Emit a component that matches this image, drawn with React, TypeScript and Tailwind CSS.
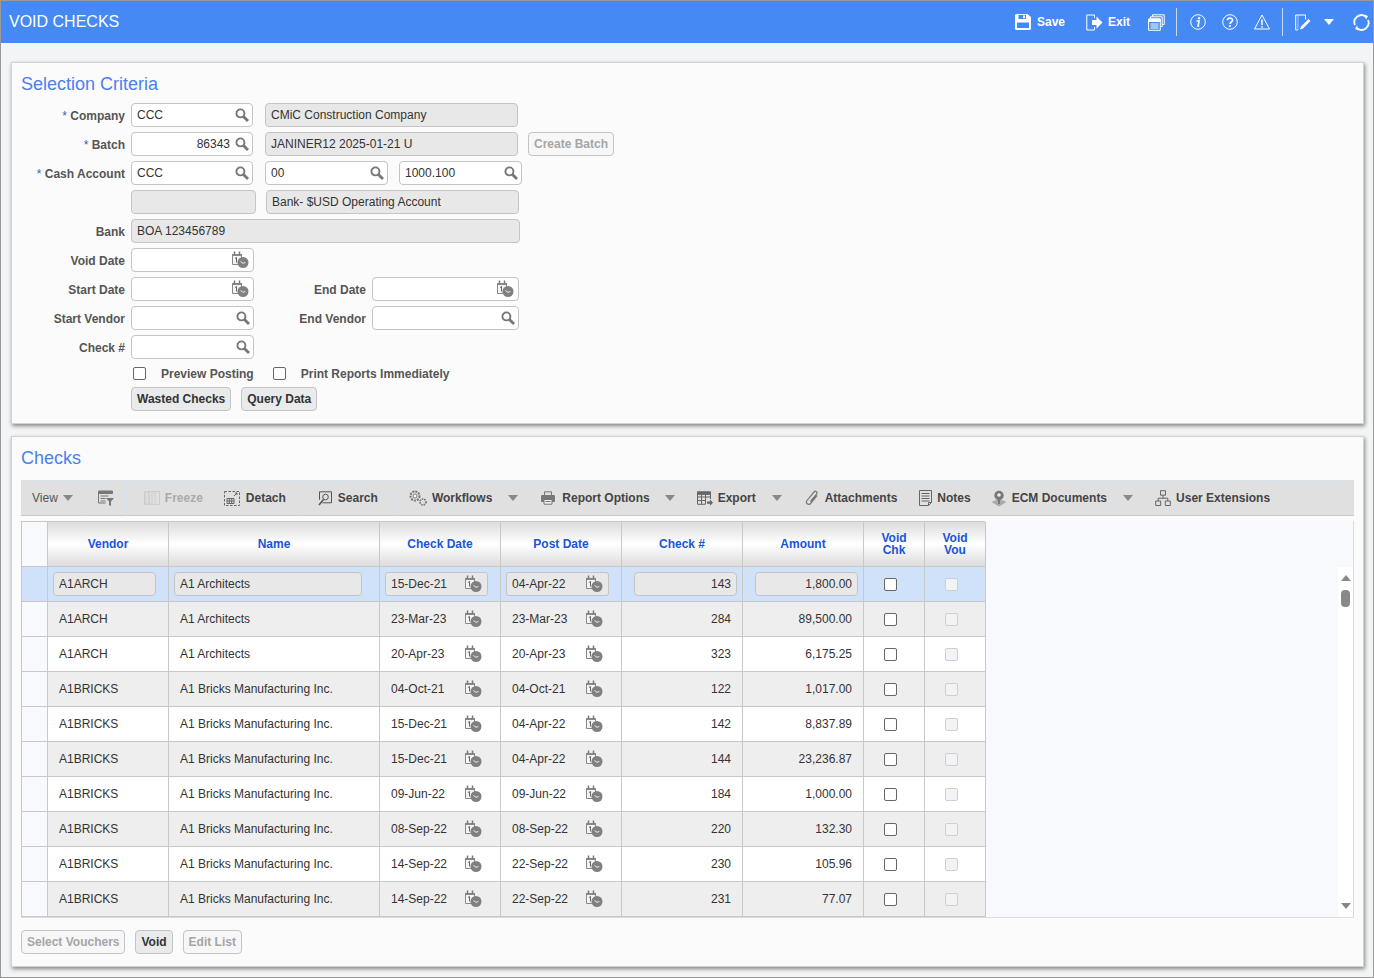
import React from 'react';

type IconProps = { className?: string };

const SearchIcon = ({ className = '' }: IconProps) => (
  <svg viewBox="0 0 14 14" className={`w-[14px] h-[14px] ${className}`} fill="none" stroke="#777" >
    <circle cx="5.4" cy="5.4" r="4" strokeWidth="1.9" />
    <path d="M8.4 8.4L13 13" strokeWidth="2.8" />
  </svg>
);

const CalendarIcon = ({ className = '' }: IconProps) => (
  <svg viewBox="0 0 18 18" className={`w-[18px] h-[18px] ${className}`} fill="none">
    <path d="M1.500 3.500h9v10h-9z" fill="#f4f4f4" stroke="#888" />
    <path d="M1 3h10v2H1z" fill="#888" />
    <path d="M3.500 .5v3M8.500 .5v3" stroke="#777" strokeWidth="1.500" />
    <path d="M4 7.500l1.500-1v5" stroke="#666" />
    <circle cx="12" cy="11.500" r="5.500" fill="#808080" />
    <path d="M9.500 10.500l2.500 1.800 2.300-.8" stroke="#eee" />
  </svg>
);

const Caret = ({ className = '' }: IconProps) => (
  <span className={`inline-block w-0 h-0 border-x-[5px] border-x-transparent border-t-[6px] ${className}`} />
);

const SaveIcon = () => (
  <svg viewBox="0 0 16 16" className="w-4 h-4" fill="#fff">
    <path d="M0 1.5A1.5 1.5 0 0 1 1.5 0h11L16 3v11.500A1.500 1.500 0 0 1 14.500 16h-13A1.500 1.500 0 0 1 0 14.500z" />
    <path d="M3.500 1h7.500v4H3.500z" fill="#4589f5" />
    <path d="M8 1.500h2v2.800H8z" fill="#fff" />
    <path d="M2 8.500h12v5.500H2z" fill="#4589f5" />
  </svg>
);

const ExitIcon = () => (
  <svg viewBox="0 0 17 17" className="w-[17px] h-[17px]" fill="none">
    <path d="M8.500 4V1H.8v15h7.700v-3" stroke="#fff" />
    <path d="M6 6h4.500V2.500L16.500 8.500l-6 6V11H6z" fill="#fff" />
  </svg>
);

const CopyIcon = () => (
  <svg viewBox="0 0 17 17" className="w-[17px] h-[17px]" fill="none" stroke="#fff">
    <path d="M4.500 2.500V.8h11.700v9.700H14" />
    <path d="M2.500 4.500V2.800h11.700v9.700H12" />
    <path d="M.6 5h11.700v11.300H.6z" fill="#4589f5" />
    <path d="M.6 5h11.700v2.500H.6z" fill="#fff" />
    <path d="M2.500 10h8M2.500 12h8M2.500 14h8" />
  </svg>
);

const InfoIcon = () => (
  <svg viewBox="0 0 16 16" className="w-4 h-4" fill="none">
    <circle cx="8" cy="8" r="7.300" stroke="#fff" />
    <circle cx="9" cy="4.200" r="1.200" fill="#fff" />
    <path d="M6.500 7h2.700l-1.300 5h1.400" stroke="#fff" strokeWidth="1.500" />
  </svg>
);

const HelpIcon = () => (
  <svg viewBox="0 0 16 16" className="w-4 h-4" fill="none">
    <circle cx="8" cy="8" r="7.300" stroke="#fff" />
    <path d="M5.500 6.300C5.500 3.500 10.500 3.500 10.500 6.200 10.500 8 8 8 8 10" stroke="#fff" strokeWidth="1.700" />
    <circle cx="8" cy="12" r="1.100" fill="#fff" />
  </svg>
);

const WarnIcon = () => (
  <svg viewBox="0 0 16 16" className="w-4 h-4" fill="none">
    <path d="M8 1L15.500 15H.5z" stroke="#fff" />
    <path d="M8 5.500v5.500" stroke="#fff" strokeWidth="1.500" />
    <circle cx="8" cy="12.800" r=".9" fill="#fff" />
  </svg>
);

const EditIcon = () => (
  <svg viewBox="0 0 16 17" className="w-4 h-[17px]" fill="none">
    <path d="M10.500 5.500V1H.7v15h2" stroke="#fff" />
    <path d="M3 1v15" stroke="#fff" strokeOpacity=".5" />
    <path d="M5 15.500l1-3L13.500 5l2 2L8 14.500z" fill="#fff" />
  </svg>
);

const RefreshIcon = () => (
  <svg viewBox="0 0 17 17" className="w-[17px] h-[17px]" fill="none">
    <path d="M2 11A7 7 0 0 1 12.500 2.500M15 6a7 7 0 0 1-10.500 8.500" stroke="#fff" strokeWidth="1.800" />
    <path d="M11 .5l4 1.500-2 3.500zM6 16.500L2 15l2-3.500z" fill="#fff" />
  </svg>
);

const tb = { fill: 'none', stroke: '#777' };

const FilterIcon = () => (
  <svg viewBox="0 0 16 16" className="w-4 h-4" {...tb}>
    <path d="M.5 1h14v2.500H.5z" fill="#777" />
    <path d="M.5 1v12h7M2.500 6h8M2.500 8.500h5M2.500 11h5" />
    <path d="M8 8h8l-3 3.500V16l-2-1v-3.500z" fill="#777" stroke="none" />
  </svg>
);

const FreezeIcon = () => (
  <svg viewBox="0 0 16 14" className="w-4 h-[14px]" fill="none" stroke="#ccc">
    <path d="M.5.5h15v13H.5zM5 .5v13M8 .5v13M11 .5v13" />
    <path d="M1 1h4v12H1z" fill="#ddd" />
  </svg>
);

const DetachIcon = () => (
  <svg viewBox="0 0 16 15" className="w-4 h-[15px]" fill="none" stroke="#666">
    <path d="M.5.500h15v14H.5z" strokeDasharray="2.500 1.500" />
    <path d="M3 7.500h7v5H3zM3 10h7M5.300 7.500v5M7.700 7.500v5" />
    <path d="M10 5l3-3M11 2h2v2" />
  </svg>
);

const SearchDocIcon = () => (
  <svg viewBox="0 0 14 15" className="w-[14px] h-[15px]" fill="none" stroke="#555">
    <path d="M1.500 .8h12v11h-9" />
    <path d="M1.500.8v8" />
    <circle cx="7.500" cy="6" r="2.800" />
    <path d="M5.500 8.500L1 14" strokeWidth="1.600" />
  </svg>
);

const GearsIcon = () => (
  <svg viewBox="0 0 18 16" className="w-[18px] h-4" fill="none" stroke="#777">
    <circle cx="6" cy="6" r="4.500" strokeWidth="2" strokeDasharray="2 1" />
    <circle cx="6" cy="6" r="2" fill="#fff" />
    <circle cx="14" cy="12" r="3" strokeWidth="1.800" strokeDasharray="1.500 1" />
  </svg>
);

const PrinterIcon = () => (
  <svg viewBox="0 0 14 14" className="w-[14px] h-[14px]" fill="none" stroke="#777">
    <path d="M3.500 4V.8h7V4" />
    <path d="M.6 4.500h12.800v6H.6z" fill="#777" />
    <path d="M3 8.500h8v4.700H3z" fill="#eee" />
    <path d="M4.500 10.500h5" />
  </svg>
);

const ExportIcon = () => (
  <svg viewBox="0 0 16 15" className="w-4 h-[15px]" fill="none" stroke="#666">
    <path d="M.5.800h13v2.500H.5z" fill="#666" />
    <path d="M.5.800v12.500h8M13.500 3v5M4.500 3v10M8.500 3v10M.5 6h13M.5 9.500h8" />
    <path d="M10 10.500h3V8.500l3 3.200-3 3v-2h-3z" fill="#666" stroke="none" />
  </svg>
);

const PaperclipIcon = () => (
  <svg viewBox="0 0 14 16" className="w-[14px] h-4" fill="none" stroke="#777" strokeWidth="1.200">
    <path d="M12 5.500L5.500 13.500c-2 2.300-5.500-.5-3.500-3L9 2c1.500-1.800 4 .2 2.700 2L5.500 11.500" />
  </svg>
);

const NotesIcon = () => (
  <svg viewBox="0 0 13 16" className="w-[13px] h-4" fill="none" stroke="#666">
    <path d="M.5.500h12v12l-3 3H.5z" />
    <path d="M2.500 3.500h8M2.500 6h8M2.500 8.500h8M2.500 11h8" />
    <path d="M9.500 15.500v-3h3" />
  </svg>
);

const EcmIcon = () => (
  <svg viewBox="0 0 16 17" className="w-4 h-[17px]" fill="none">
    <path d="M.5 12l7.500-3.500 7.500 3.500L8 16.500z" fill="#aaa" />
    <circle cx="8" cy="5.500" r="4.700" fill="#777" />
    <circle cx="8" cy="5" r="1.800" fill="#eee" />
    <path d="M7 9h2v5H7z" fill="#777" />
  </svg>
);

const TreeIcon = () => (
  <svg viewBox="0 0 16 16" className="w-4 h-4" fill="none" stroke="#666">
    <path d="M5.500.700h5v4.500h-5zM.7 11h5v4.500h-5zM10.300 11h5v4.500h-5z" />
    <path d="M8 5.200v3M3.200 11V8.200h9.600V11" />
  </svg>
);

const Field = ({
  w,
  value = '',
  icon,
  disabled = false,
  right = false,
}: {
  w: string;
  value?: string;
  icon?: 'search' | 'date';
  disabled?: boolean;
  right?: boolean;
}) => (
  <div
    className={`${w} h-6 shrink-0 flex items-center rounded-[4px] border border-[#c4c4c4] pl-[5px] text-xs text-[#333] ${
      disabled ? 'bg-[#e8e8e8]' : 'bg-white'
    } ${right ? 'justify-end' : 'justify-between'} ${icon === 'search' ? 'pr-[3px]' : 'pr-[5px]'}`}
  >
    <span className={right ? 'mr-[5px]' : ''}>{value}</span>
    {icon === 'search' && <SearchIcon />}
    {icon === 'date' && <CalendarIcon className="-mr-[1px]" />}
  </div>
);

const Label = ({ text, req = false, w = 'w-[104px]' }: { text: string; req?: boolean; w?: string }) => (
  <div className={`${w} shrink-0 text-right text-xs font-bold text-[#555] mr-[6px] whitespace-nowrap pt-[1px]`}>
    {req && <span className="font-normal text-[#3a62b8]">* </span>}
    {text}
  </div>
);

const Row = ({ children }: { children: React.ReactNode }) => (
  <div className="flex items-center h-6 mb-[5px]">{children}</div>
);

const Btn = ({ children, off = false }: { children: React.ReactNode; off?: boolean }) => (
  <div
    className={`h-6 flex items-center px-[5px] rounded-[4px] border border-[#c4c4c4] text-xs font-bold ${
      off ? 'text-[#a6a6a6] bg-[#f7f7f7]' : 'text-[#333] bg-[#e8eaec]'
    }`}
  >
    {children}
  </div>
);

const Box = ({ disabled = false, className = '' }: { disabled?: boolean; className?: string }) => (
  <span
    className={`block w-[13px] h-[13px] rounded-[2px] border ${
      disabled ? 'border-[#cfcfcf] bg-[#f1f3f6]' : 'border-[#666] bg-white'
    } ${className}`}
  />
);

const Panel = ({ title, className, children }: { title: string; className: string; children: React.ReactNode }) => (
  <div className={`bg-[#fbfbfb] border border-[#d2d2d2] shadow-[1px_2px_4px_rgba(0,0,0,0.45)] pl-[9px] pt-[11px] ${className}`}>
    <div className="text-lg leading-5 text-[#4a80f0] mb-[9px]">{title}</div>
    {children}
  </div>
);

const Sep = ({ className }: { className: string }) => <span className={`w-px h-[35px] bg-[#d8e0ea] ${className}`} />;

const TbItem = ({
  icon,
  text,
  className = '',
  gap = 'ml-[5px]',
  off = false,
}: {
  icon: React.ReactNode;
  text: string;
  className?: string;
  gap?: string;
  off?: boolean;
}) => (
  <div className={`flex items-center shrink-0 ${className}`}>
    {icon}
    <span className={`${gap} text-xs font-bold whitespace-nowrap ${off ? 'text-[#aaa]' : 'text-[#444]'}`}>{text}</span>
  </div>
);

const checks = [
  ['A1ARCH', 'A1 Architects', '15-Dec-21', '04-Apr-22', '143', '1,800.00'],
  ['A1ARCH', 'A1 Architects', '23-Mar-23', '23-Mar-23', '284', '89,500.00'],
  ['A1ARCH', 'A1 Architects', '20-Apr-23', '20-Apr-23', '323', '6,175.25'],
  ['A1BRICKS', 'A1 Bricks Manufacturing Inc.', '04-Oct-21', '04-Oct-21', '122', '1,017.00'],
  ['A1BRICKS', 'A1 Bricks Manufacturing Inc.', '15-Dec-21', '04-Apr-22', '142', '8,837.89'],
  ['A1BRICKS', 'A1 Bricks Manufacturing Inc.', '15-Dec-21', '04-Apr-22', '144', '23,236.87'],
  ['A1BRICKS', 'A1 Bricks Manufacturing Inc.', '09-Jun-22', '09-Jun-22', '184', '1,000.00'],
  ['A1BRICKS', 'A1 Bricks Manufacturing Inc.', '08-Sep-22', '08-Sep-22', '220', '132.30'],
  ['A1BRICKS', 'A1 Bricks Manufacturing Inc.', '14-Sep-22', '22-Sep-22', '230', '105.96'],
  ['A1BRICKS', 'A1 Bricks Manufacturing Inc.', '14-Sep-22', '22-Sep-22', '231', '77.07'],
];

const cols = 'grid grid-cols-[26px_121px_211px_121px_121px_121px_121px_61px_61px]';
const cell = 'border-r border-b border-[#c8c8c8] flex items-center text-xs text-[#333] min-w-0';
const heads = ['Vendor', 'Name', 'Check Date', 'Post Date', 'Check #', 'Amount'];

const DateCell = ({ value, selected }: { value: string; selected: boolean }) => (
  <div className={`${cell} ${selected ? 'pl-[5px]' : 'pl-[11px]'}`}>
    {selected ? (
      <div className="w-[103px] h-6 flex items-center justify-between pl-[5px] pr-[5px] bg-[#e8e8e8] border border-[#c4c4c4] rounded-[3px]">
        <span>{value}</span>
        <CalendarIcon />
      </div>
    ) : (
      <div className="w-[91px] flex items-center justify-between">
        <span>{value}</span>
        <CalendarIcon />
      </div>
    )}
  </div>
);

const TextCell = ({ value, w, selected, right = false }: { value: string; w: string; selected: boolean; right?: boolean }) => (
  <div className={`${cell} ${selected ? (right ? 'justify-end pr-[5px]' : 'pl-[5px]') : right ? 'justify-end pr-[11px]' : 'pl-[11px]'}`}>
    {selected ? (
      <div className={`${w} h-6 flex items-center px-[5px] bg-[#e8e8e8] border border-[#c4c4c4] rounded-[4px] ${right ? 'justify-end' : ''}`}>
        {value}
      </div>
    ) : (
      <span className="whitespace-nowrap">{value}</span>
    )}
  </div>
);

export default function App() {
  return (
    <div className="w-[1374px] h-[978px] overflow-hidden border border-[#999] bg-[#f2f4f5] font-['Liberation_Sans',Arial,sans-serif]">
      {/* title bar */}
      <div className="h-[42px] bg-[#4589f5] flex items-center text-white pl-2">
        <div className="text-base">VOID CHECKS</div>
        <div className="ml-auto flex items-center">
          <SaveIcon />
          <span className="ml-[6px] text-xs font-bold">Save</span>
          <span className="ml-[21px]"><ExitIcon /></span>
          <span className="ml-[5px] text-xs font-bold">Exit</span>
          <span className="ml-[18px]"><CopyIcon /></span>
          <span className="ml-[11px] w-px h-[28px] bg-[#c8d8f5]" />
          <span className="ml-[13px]"><InfoIcon /></span>
          <span className="ml-4"><HelpIcon /></span>
          <span className="ml-4"><WarnIcon /></span>
          <span className="ml-3 w-px h-[28px] bg-[#c8d8f5]" />
          <span className="ml-3"><EditIcon /></span>
          <Caret className="ml-[13px] border-t-white" />
          <span className="ml-[19px] mr-[3px]"><RefreshIcon /></span>
        </div>
      </div>

      <div className="pl-[10px] pr-[9px] pt-[19px]">
        <Panel title="Selection Criteria" className="h-[362px]">
          <Row>
            <Label text="Company" req />
            <Field w="w-[122px]" value="CCC" icon="search" />
            <div className="w-3" />
            <Field w="w-[253px]" value="CMiC Construction Company" disabled />
          </Row>
          <Row>
            <Label text="Batch" req />
            <Field w="w-[122px]" value="86343" icon="search" right />
            <div className="w-3" />
            <Field w="w-[253px]" value="JANINER12 2025-01-21 U" disabled />
            <div className="ml-[10px]"><Btn off>Create Batch</Btn></div>
          </Row>
          <Row>
            <Label text="Cash Account" req />
            <Field w="w-[122px]" value="CCC" icon="search" />
            <div className="w-3" />
            <Field w="w-[123px]" value="00" icon="search" />
            <div className="w-[11px]" />
            <Field w="w-[123px]" value="1000.100" icon="search" />
          </Row>
          <Row>
            <Label text="" />
            <Field w="w-[125px]" disabled />
            <div className="w-[10px]" />
            <Field w="w-[253px]" value="Bank- $USD Operating Account" disabled />
          </Row>
          <Row>
            <Label text="Bank" />
            <Field w="w-[389px]" value="BOA 123456789" disabled />
          </Row>
          <Row>
            <Label text="Void Date" />
            <Field w="w-[123px]" icon="date" />
          </Row>
          <Row>
            <Label text="Start Date" />
            <Field w="w-[123px]" icon="date" />
            <Label text="End Date" w="w-[112px]" />
            <Field w="w-[147px]" icon="date" />
          </Row>
          <Row>
            <Label text="Start Vendor" />
            <Field w="w-[123px]" icon="search" />
            <Label text="End Vendor" w="w-[112px]" />
            <Field w="w-[147px]" icon="search" />
          </Row>
          <Row>
            <Label text="Check #" />
            <Field w="w-[123px]" icon="search" />
          </Row>
          <div className="flex items-center h-[18px] mt-[1px] pl-[112px] text-xs font-bold text-[#555]">
            <Box />
            <span className="ml-[15px] pt-[2px]">Preview Posting</span>
            <Box className="ml-[19px]" />
            <span className="ml-[15px] pt-[2px]">Print Reports Immediately</span>
          </div>
          <div className="flex gap-[10px] pl-[110px] mt-[5px]">
            <Btn>Wasted Checks</Btn>
            <Btn>Query Data</Btn>
          </div>
        </Panel>

        <Panel title="Checks" className="h-[531px] mt-3">
          <div className="w-[1333px] mt-[12px] h-[36px] bg-[#e0e0e0] border-t border-[#d8e0ea] border-b-[#c8c8c8] border-b flex items-center pl-[11px] text-xs">
            <span className="text-[#555]">View</span>
            <Caret className="ml-[5px] border-t-[#888]" />
            <Sep className="ml-[12px]" />
            <span className="ml-[12px]"><FilterIcon /></span>
            <Sep className="ml-[12px]" />
            <TbItem icon={<FreezeIcon />} text="Freeze" off className="ml-[17px]" />
            <TbItem icon={<DetachIcon />} text="Detach" className="ml-[21px]" gap="ml-[6px]" />
            <Sep className="ml-[15px]" />
            <TbItem icon={<SearchDocIcon />} text="Search" className="ml-[16px]" gap="ml-[6px]" />
            <Sep className="ml-[16px]" />
            <TbItem icon={<GearsIcon />} text="Workflows" className="ml-[14px]" />
            <Caret className="ml-4 border-t-[#888]" />
            <TbItem icon={<PrinterIcon />} text="Report Options" className="ml-[23px]" gap="ml-[7px]" />
            <Caret className="ml-[15px] border-t-[#888]" />
            <TbItem icon={<ExportIcon />} text="Export" className="ml-[22px]" />
            <Caret className="ml-4 border-t-[#888]" />
            <TbItem icon={<PaperclipIcon />} text="Attachments" className="ml-[23px]" gap="ml-[6px]" />
            <TbItem icon={<NotesIcon />} text="Notes" className="ml-[22px]" />
            <TbItem icon={<EcmIcon />} text="ECM Documents" className="ml-[20px]" />
            <Caret className="ml-4 border-t-[#888]" />
            <TbItem icon={<TreeIcon />} text="User Extensions" className="ml-[22px]" />
          </div>

          <div className="w-[1333px] h-[397px] mt-[5px] flex bg-[#f8f9fd] border-r border-b border-[#d5dde8]">
            <div className="w-[964px] border-l border-t border-[#c8c8c8]">
              <div className={`${cols} h-[45px]`}>
                <div className="bg-[#f8f9fd] border-r border-b border-[#c8c8c8]" />
                {heads.map((h) => (
                  <div
                    key={h}
                    className={`${cell} justify-center font-bold !text-[#1a55d6] bg-[linear-gradient(180deg,#dcdcdc,#fff_50%,#dcdcdc)]`}
                  >
                    {h}
                  </div>
                ))}
                {['Void Chk', 'Void Vou'].map((h) => (
                  <div
                    key={h}
                    className={`${cell} justify-center text-center font-bold !text-[#1a55d6] leading-3 px-4 bg-[linear-gradient(180deg,#dcdcdc,#fff_50%,#dcdcdc)]`}
                  >
                    {h}
                  </div>
                ))}
              </div>
              {checks.map((r, i) => {
                const selected = i === 0;
                const bg = selected ? 'bg-[#d0e1fa]' : i % 2 === 1 ? 'bg-[#eeeeee]' : 'bg-white';
                return (
                  <div key={i} className={`${cols} h-[35px] ${bg}`}>
                    <div className={`border-r border-b border-[#c8c8c8] ${selected ? '' : 'bg-[#f8f9fd]'}`} />
                    <TextCell value={r[0]} w="w-[103px]" selected={selected} />
                    <TextCell value={r[1]} w="w-[188px]" selected={selected} />
                    <DateCell value={r[2]} selected={selected} />
                    <DateCell value={r[3]} selected={selected} />
                    <TextCell value={r[4]} w="w-[103px]" selected={selected} right />
                    <TextCell value={r[5]} w="w-[103px]" selected={selected} right />
                    <div className={`${cell} justify-center pr-2`}><Box /></div>
                    <div className={`${cell} justify-center pr-2`}><Box disabled /></div>
                  </div>
                );
              })}
            </div>
            <div className="ml-auto mt-[46px] w-[15px] bg-white flex flex-col items-center">
              <Caret className="mt-[8px] rotate-180 border-t-[#888]" />
              <span className="mt-[9px] w-[9px] h-[17px] rounded-[4px] bg-[#888]" />
              <Caret className="mt-auto mb-[8px] border-t-[#888]" />
            </div>
          </div>

          <div className="flex mt-3">
            <Btn off>Select Vouchers</Btn>
            <div className="ml-[10px]"><Btn>Void</Btn></div>
            <div className="ml-[10px]"><Btn off>Edit List</Btn></div>
          </div>
        </Panel>
      </div>
    </div>
  );
}
